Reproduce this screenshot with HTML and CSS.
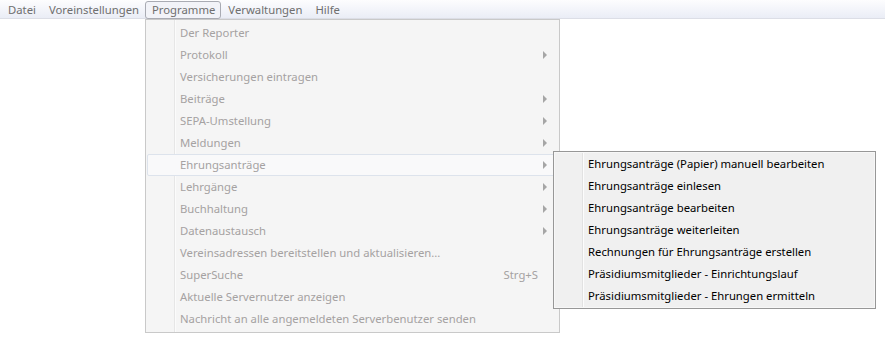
FILE: index.html
```html
<!DOCTYPE html>
<html>
  <head>
    <title>Programme</title>
    <link rel="stylesheet" href="styles.css">
  </head>
  <body>
    <div class="menubar">
      <div class="top-item">Datei</div>
      <div class="top-item">Voreinstellungen</div>
      <div class="top-item open">Programme</div>
      <div class="top-item">Verwaltungen</div>
      <div class="top-item">Hilfe</div>
    </div>

    <div class="dropdown">
      <div class="entry">Der Reporter</div>
      <div class="entry sub">Protokoll</div>
      <div class="entry">Versicherungen eintragen</div>
      <div class="entry sub">Beiträge</div>
      <div class="entry sub">SEPA-Umstellung</div>
      <div class="entry sub">Meldungen</div>
      <div class="entry sub active">Ehrungsanträge</div>
      <div class="entry sub">Lehrgänge</div>
      <div class="entry sub">Buchhaltung</div>
      <div class="entry sub">Datenaustausch</div>
      <div class="entry">Vereinsadressen bereitstellen und aktualisieren...</div>
      <div class="entry">SuperSuche<span class="shortcut">Strg+S</span></div>
      <div class="entry">Aktuelle Servernutzer anzeigen</div>
      <div class="entry">Nachricht an alle angemeldeten Serverbenutzer senden</div>
    </div>

    <div class="submenu">
      <div class="sub-entry">Ehrungsanträge (Papier) manuell bearbeiten</div>
      <div class="sub-entry">Ehrungsanträge einlesen</div>
      <div class="sub-entry">Ehrungsanträge bearbeiten</div>
      <div class="sub-entry">Ehrungsanträge weiterleiten</div>
      <div class="sub-entry">Rechnungen für Ehrungsanträge erstellen</div>
      <div class="sub-entry">Präsidiumsmitglieder - Einrichtungslauf</div>
      <div class="sub-entry">Präsidiumsmitglieder - Ehrungen ermitteln</div>
    </div>
  </body>
</html>
```

FILE: styles.css
```css
body {
  margin: 0;
  background: #fff;
  font-family: "Noto Sans", "Open Sans", sans-serif;
  font-size: 11.3px;
}
.menubar {
  display: flex;
  height: 18px;
  padding-left: 1px;
  background: linear-gradient(#fdfdfe, #eaedf6);
  border-bottom: 1px solid #dcdee6;
  color: #6f6f6f;
}
.top-item {
  height: 16px;
  margin-top: 1px;
  padding: 0 5px 0 6px;
  line-height: 16px;
  border: 1px solid transparent;
  white-space: nowrap;
}
.top-item.open {
  border-color: #a9abb3;
  border-radius: 3px;
  background: #f2f3f8;
}
.dropdown {
  position: absolute;
  left: 145px;
  top: 19px;
  width: 411px;
  padding: 2px 1px;
  background: #f5f5f5;
  border: 1px solid #c9c9c9;
  color: #a5a2a2;
  background-image: linear-gradient(90deg, transparent 28px, #e6e6e6 28px, #e6e6e6 29px, #fbfbfb 29px, #fbfbfb 30px, transparent 30px);
}
.entry {
  position: relative;
  height: 20px;
  line-height: 20px;
  padding-left: 32px;
  border: 1px solid transparent;
  white-space: nowrap;
}
.entry.sub::after {
  content: "";
  position: absolute;
  right: 10px;
  top: 6px;
  border-left: 4px solid #a6a6a6;
  border-top: 4px solid transparent;
  border-bottom: 4px solid transparent;
}
.entry.active {
  background: #f9f9fa;
  border-color: #dde3ec;
  border-radius: 2px;
}
.shortcut {
  position: absolute;
  right: 19px;
}
.submenu {
  position: absolute;
  left: 553px;
  top: 151px;
  width: 319px;
  padding: 1px;
  background: #f0f0f0;
  border: 1px solid #979797;
  box-shadow: inset 0 0 0 1px #f7f7f7;
  color: #000;
  background-image: linear-gradient(90deg, transparent 28px, #e2e2e2 28px, #e2e2e2 29px, #fcfcfc 29px, #fcfcfc 30px, transparent 30px);
}
.sub-entry {
  height: 22px;
  line-height: 22px;
  padding-left: 33px;
  white-space: nowrap;
}
```
